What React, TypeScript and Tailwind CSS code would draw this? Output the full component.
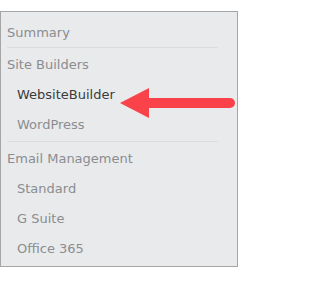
import React from "react";

const font = { fontFamily: '"DejaVu Sans", "Liberation Sans", sans-serif' };

function Row({ children, sub, active }: { children: React.ReactNode; sub?: boolean; active?: boolean }) {
  return (
    <div
      className={
        "flex h-[30px] items-center text-[13px] leading-none " +
        (sub ? "pl-[16px] " : "pl-[6px] ") +
        (active ? "text-[#3b3b3b]" : "text-[#8b8d90]")
      }
    >
      {children}
    </div>
  );
}

function Divider() {
  return <div className="ml-[6px] h-px w-[211px] bg-[#dcdddf]" />;
}

export default function App() {
  return (
    <div className="relative h-[292px] w-[238px] bg-white" style={font}>
      <div className="mt-[11px] flex h-[256px] w-[238px] flex-col border border-[#a6a6a6] bg-[#e9eaec] pt-[5px]">
        <Row>Summary</Row>
        <Divider />
        <div className="h-px" />
        <Row>Site Builders</Row>
        <Row sub active>WebsiteBuilder</Row>
        <Row sub>WordPress</Row>
        <div className="h-[2px]" />
        <Divider />
        <div className="h-px" />
        <Row>Email Management</Row>
        <Row sub>Standard</Row>
        <Row sub>G Suite</Row>
        <Row sub>Office 365</Row>
      </div>
      <svg
        className="absolute left-[119px] top-[76px]"
        width="118"
        height="32"
        viewBox="0 0 118 32"
      >
        <path d="M1 16 L30 1 L30 11 L111 11 A5 5 0 0 1 111 21 L30 21 L30 31 Z" fill="#f9424a" />
      </svg>
    </div>
  );
}
